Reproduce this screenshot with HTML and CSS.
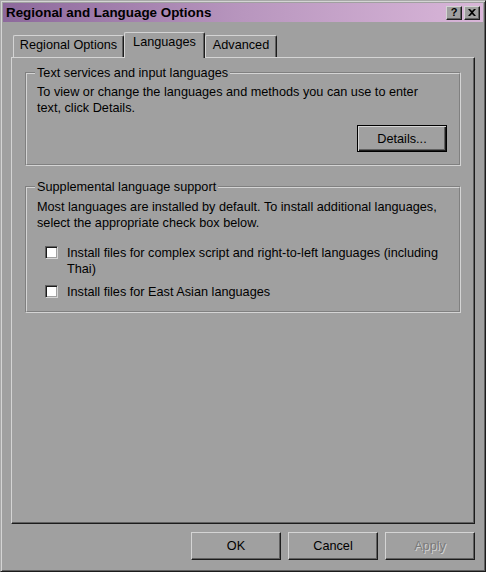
FILE: index.html
```html
<!DOCTYPE html>
<html>
<head>
<meta charset="utf-8">
<title>Regional and Language Options</title>
<link rel="stylesheet" href="styles.css">
</head>
<body>
<div class="window">
  <div class="titlebar">
    <span class="title">Regional and Language Options</span>
    <div class="title-buttons">
      <span class="tbtn help">?</span>
      <span class="tbtn close">
        <svg width="8" height="7" viewBox="0 0 8 7"><path d="M0 0h2l2 2 2-2h2L5 3.5 8 7H6L4 5 2 7H0l3-3.5z" fill="#000"/></svg>
      </span>
    </div>
  </div>
  <div class="tabs">
    <div class="tab t-regional">Regional Options</div>
    <div class="tab t-languages active">Languages</div>
    <div class="tab t-advanced">Advanced</div>
  </div>
  <div class="panel">
    <fieldset class="group g-text">
      <legend>Text services and input languages</legend>
      <p class="desc">To view or change the languages and methods you can use to enter<br>text, click Details.</p>
      <div class="row-right"><button class="btn default">Details...</button></div>
    </fieldset>
    <fieldset class="group g-supp">
      <legend>Supplemental language support</legend>
      <p class="desc">Most languages are installed by default. To install additional languages,<br>select the appropriate check box below.</p>
      <div class="check first"><span class="box"></span><span class="label">Install files for complex script and right-to-left languages (including<br>Thai)</span></div>
      <div class="check second"><span class="box"></span><span class="label">Install files for East Asian languages</span></div>
    </fieldset>
  </div>
  <div class="actions">
    <button class="btn">OK</button>
    <button class="btn">Cancel</button>
    <button class="btn disabled">Apply</button>
  </div>
</div>
</body>
</html>
```

FILE: styles.css
```css
* { box-sizing: border-box; }
html, body { margin: 0; padding: 0; }
body {
  width: 486px;
  height: 572px;
  background: #a0a0a0;
  font-family: "Liberation Sans", Arial, sans-serif;
  font-size: 12.7px;
  line-height: 16px;
  color: #000;
  overflow: hidden;
}
.window {
  width: 486px;
  height: 572px;
  border: 1px solid;
  border-color: #a8a8a8 #1c1c1c #1c1c1c #a8a8a8;
  box-shadow: inset 1px 1px 0 #d4d4d4, inset -1px -1px 0 #606060;
  padding: 2px;
  display: flex;
  flex-direction: column;
}
.titlebar {
  height: 19px;
  flex: none;
  display: flex;
  align-items: center;
  justify-content: space-between;
  padding: 0 3px 0 3px;
  background: linear-gradient(90deg, #8d699c 0%, #b896be 50%, #d9b6d9 100%);
}
.title {
  font-weight: bold;
  font-size: 13.4px;
  line-height: 18px;
  padding-top: 1px;
}
.title-buttons { display: flex; gap: 2px; }
.tbtn {
  width: 16px;
  height: 14px;
  display: flex;
  align-items: center;
  justify-content: center;
  background: #a0a0a0;
  border: 1px solid;
  border-color: #d4d4d4 #1c1c1c #1c1c1c #d4d4d4;
  box-shadow: inset -1px -1px 0 #606060;
  font-weight: bold;
  font-size: 11px;
  line-height: 12px;
}
.tbtn.help { padding-bottom: 1px; }
.tabs {
  flex: none;
  height: 25px;
  margin: 10px 0 0 10px;
  display: flex;
  align-items: flex-end;
}
.tab {
  height: 22px;
  padding-top: 1px;
  text-align: center;
  line-height: 16px;
  white-space: nowrap;
  border-top: 1px solid #d4d4d4;
  border-left: 1px solid #d4d4d4;
  border-right: 1px solid #1c1c1c;
  box-shadow: inset -1px 0 0 #606060;
  border-radius: 2px 2px 0 0;
  background: #a0a0a0;
}
.t-regional { width: 111px; }
.t-languages { width: 81px; }
.t-advanced { width: 72px; }
.tab.active {
  height: 26px;
  margin-bottom: -1px;
  padding-top: 1px;
  position: relative;
  z-index: 1;
}
.panel {
  flex: 1;
  margin: 0 8px;
  border: 1px solid;
  border-color: #d4d4d4 #1c1c1c #1c1c1c #d4d4d4;
  box-shadow: inset -1px -1px 0 #606060;
  padding: 7px 13px 0 13px;
}
.group {
  margin: 0;
  min-width: 0;
  border: 2px groove #d4d4d4;
  padding: 3px 12px 12px 10px;
}
.group legend {
  padding: 0 2px;
  margin-left: -2px;
  line-height: 16px;
}
.g-supp {
  margin-top: 13px;
  padding-top: 4px;
  padding-bottom: 11px;
}
.desc {
  margin: 0;
  white-space: nowrap;
}
.row-right {
  display: flex;
  justify-content: flex-end;
  margin-top: 9px;
}
.btn {
  width: 90px;
  height: 28px;
  padding: 0;
  font-family: inherit;
  font-size: 12.7px;
  line-height: 16px;
  color: #000;
  background: #a0a0a0;
  border: 1px solid;
  border-color: #d4d4d4 #1c1c1c #1c1c1c #d4d4d4;
  box-shadow: inset -1px -1px 0 #606060;
  border-radius: 0;
}
.btn.default {
  height: 27px;
  border: 1px solid #000;
  box-shadow: inset 1px 1px 0 #d4d4d4, inset -1px -1px 0 #1c1c1c, inset -2px -2px 0 #606060;
}
.btn.disabled {
  color: #7a7a7a;
  text-shadow: 1px 1px 0 #d4d4d4;
}
.check {
  display: flex;
  align-items: flex-start;
  padding-left: 8px;
  white-space: nowrap;
}
.check.first { margin-top: 14px; }
.check.second { margin-top: 7px; }
.box {
  flex: none;
  width: 13px;
  height: 13px;
  margin-top: 1px;
  margin-right: 9px;
  background: #fff;
  border: 1px solid;
  border-color: #606060 #d4d4d4 #d4d4d4 #606060;
  box-shadow: inset 1px 1px 0 #1c1c1c, inset -1px -1px 0 #a0a0a0;
}
.actions {
  flex: none;
  display: flex;
  justify-content: flex-end;
  gap: 7px;
  margin: 8px 8px 9px 0;
}
```
